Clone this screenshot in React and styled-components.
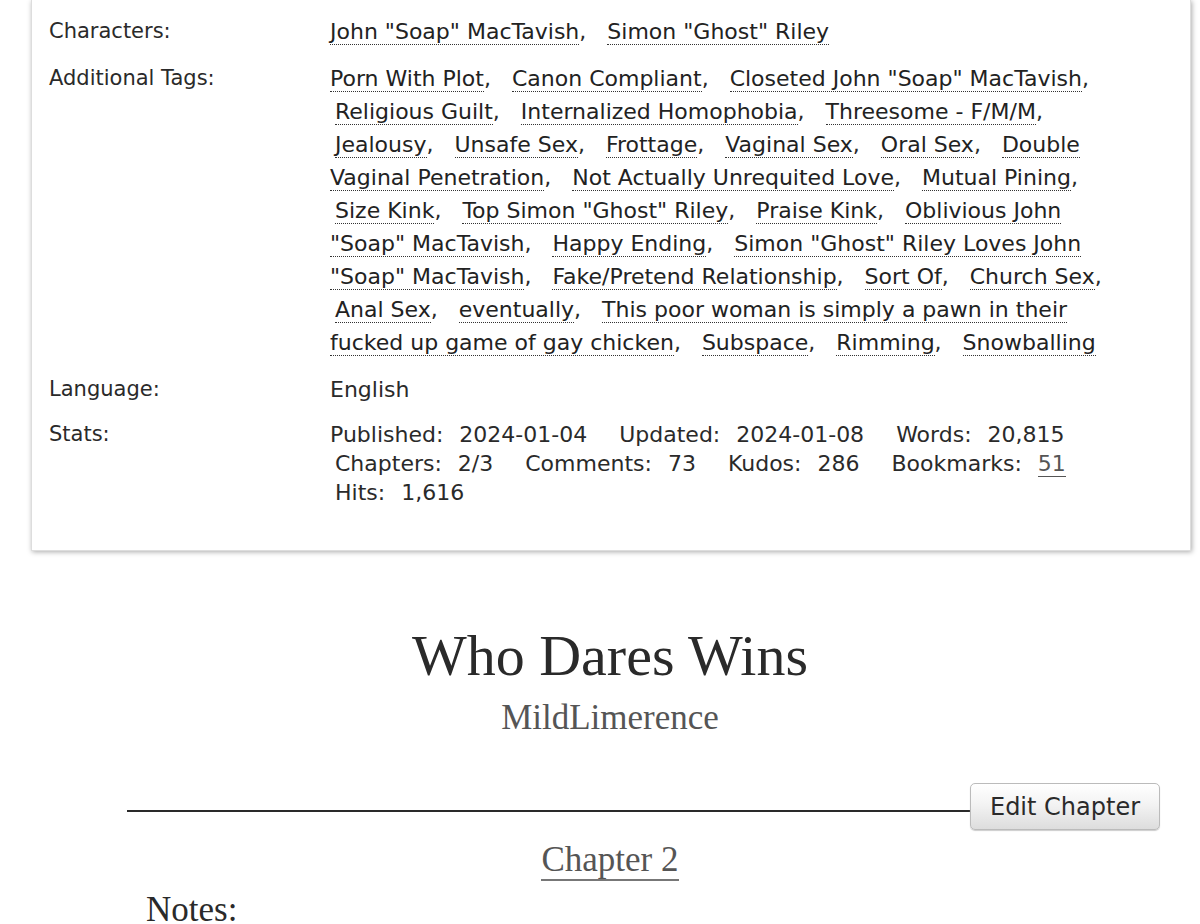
import React from 'react';
import styled, { createGlobalStyle } from 'styled-components';

const GlobalStyle = createGlobalStyle`
  html, body {
    margin: 0;
    padding: 0;
    background: #fff;
    color: #2a2a2a;
    overflow: hidden;
  }
`;

const sans = `"DejaVu Sans", "Liberation Sans", sans-serif`;
const serif = `"Liberation Serif", "DejaVu Serif", serif`;

const s = {
  page: styled.div`
    width: 1200px;
    height: 924px;
    overflow: hidden;
  `,
  metaBox: styled.dl`
    margin: 0 9px 0 31px;
    padding: 15px 0 43px 17px;
    border: 1px solid #ddd;
    border-top: none;
    box-shadow: 1px 1px 5px #aaa;
    font-family: ${sans};
    font-size: 22px;
    color: #2a2a2a;
  `,
  row: styled.div`
    display: grid;
    grid-template-columns: 281px 810px;
    margin-bottom: ${(p) => (p.last ? 0 : 14)}px;
    line-height: ${(p) => (p.tight ? 29 : 33)}px;
  `,
  label: styled.dt`
    margin: 0;
    font-size: 21px;
  `,
  value: styled.dd`
    margin: 0;
  `,
  tagList: styled.ul`
    margin: 0;
    padding: 0;
    list-style: none;
  `,
  tag: styled.li`
    display: inline;
    padding-left: ${(p) => (p.first ? 0 : 5)}px;
    margin-right: 9px;
  `,
  tagLink: styled.a`
    color: #222;
    text-decoration: none;
    border-bottom: 1px dotted #333;
  `,
  statList: styled.dl`
    margin: 0;
    padding: 0;
  `,
  stat: styled.span`
    white-space: nowrap;
    padding-left: ${(p) => (p.first ? 0 : 5)}px;
  `,
  statName: styled.dt`
    display: inline;
  `,
  statValue: styled.dd`
    display: inline;
    margin: 0 20px 0 16px;
  `,
  statLink: styled.a`
    color: #555;
    text-decoration: none;
    border-bottom: 1px solid #555;
  `,
  preface: styled.div`
    padding-left: 20px;
    text-align: center;
    font-family: ${serif};
  `,
  title: styled.h2`
    margin: 71px 0 0;
    font-size: 58px;
    font-weight: normal;
    line-height: 68px;
    color: #2a2a2a;
  `,
  byline: styled.h3`
    margin: 8px 0 0;
    font-size: 35px;
    font-weight: normal;
    line-height: 40px;
    color: #555;
  `,
  navRow: styled.div`
    display: flex;
    align-items: center;
    margin: 45px 40px 0 127px;
  `,
  rule: styled.div`
    flex: 1;
    height: 2px;
    margin-top: 8px;
    background: #2a2a2a;
  `,
  button: styled.button`
    width: 190px;
    height: 47px;
    padding: 0;
    font-family: ${sans};
    font-size: 24px;
    color: #2a2a2a;
    background: linear-gradient(#fff 0%, #f3f3f3 45%, #ddd 100%);
    border: 1px solid #bbb;
    border-radius: 5px;
    box-shadow: 0 1px 1px #ccc;
  `,
  chapterTitle: styled.h3`
    margin: 10px 0 0;
    padding-left: 20px;
    text-align: center;
    font-family: ${serif};
    font-size: 35px;
    font-weight: normal;
    line-height: 40px;
  `,
  chapterLink: styled.a`
    color: #555;
    text-decoration: none;
    border-bottom: 2px solid #777;
  `,
  notes: styled.h3`
    margin: 10px 0 0 146px;
    font-family: ${serif};
    font-size: 35px;
    font-weight: normal;
    line-height: 40px;
    color: #2a2a2a;
  `,
};

const characters = ['John "Soap" MacTavish', 'Simon "Ghost" Riley'];

const tags = [
  'Porn With Plot',
  'Canon Compliant',
  'Closeted John "Soap" MacTavish',
  'Religious Guilt',
  'Internalized Homophobia',
  'Threesome - F/M/M',
  'Jealousy',
  'Unsafe Sex',
  'Frottage',
  'Vaginal Sex',
  'Oral Sex',
  'Double Vaginal Penetration',
  'Not Actually Unrequited Love',
  'Mutual Pining',
  'Size Kink',
  'Top Simon "Ghost" Riley',
  'Praise Kink',
  'Oblivious John "Soap" MacTavish',
  'Happy Ending',
  'Simon "Ghost" Riley Loves John "Soap" MacTavish',
  'Fake/Pretend Relationship',
  'Sort Of',
  'Church Sex',
  'Anal Sex',
  'eventually',
  'This poor woman is simply a pawn in their fucked up game of gay chicken',
  'Subspace',
  'Rimming',
  'Snowballing',
];

const stats = [
  ['Published:', '2024-01-04'],
  ['Updated:', '2024-01-08'],
  ['Words:', '20,815'],
  ['Chapters:', '2/3'],
  ['Comments:', '73'],
  ['Kudos:', '286'],
  ['Bookmarks:', '51', true],
  ['Hits:', '1,616'],
];

const TagList = ({ items }) => (
  <s.tagList>
    {items.map((t, i) => (
      <React.Fragment key={t}>
        <s.tag first={i === 0}>
          <s.tagLink href="#">{t}</s.tagLink>
          {i < items.length - 1 ? ',' : ''}
        </s.tag>{' '}
      </React.Fragment>
    ))}
  </s.tagList>
);

const App = () => {
  return (
    <s.page>
      <GlobalStyle />
      <s.metaBox>
        <s.row>
          <s.label>Characters:</s.label>
          <s.value>
            <TagList items={characters} />
          </s.value>
        </s.row>
        <s.row>
          <s.label>Additional Tags:</s.label>
          <s.value>
            <TagList items={tags} />
          </s.value>
        </s.row>
        <s.row>
          <s.label>Language:</s.label>
          <s.value>English</s.value>
        </s.row>
        <s.row tight last>
          <s.label>Stats:</s.label>
          <s.value>
            <s.statList>
              {stats.map(([name, val, link], i) => (
                <React.Fragment key={name}>
                  <s.stat first={i === 0}>
                    <s.statName>{name}</s.statName>
                    <s.statValue>
                      {link ? <s.statLink href="#">{val}</s.statLink> : val}
                    </s.statValue>
                  </s.stat>{' '}
                </React.Fragment>
              ))}
            </s.statList>
          </s.value>
        </s.row>
      </s.metaBox>

      <s.preface>
        <s.title>Who Dares Wins</s.title>
        <s.byline>MildLimerence</s.byline>
      </s.preface>

      <s.navRow>
        <s.rule />
        <s.button>Edit Chapter</s.button>
      </s.navRow>

      <s.chapterTitle>
        <s.chapterLink href="#">Chapter 2</s.chapterLink>
      </s.chapterTitle>
      <s.notes>Notes:</s.notes>
    </s.page>
  );
};

export default App;
